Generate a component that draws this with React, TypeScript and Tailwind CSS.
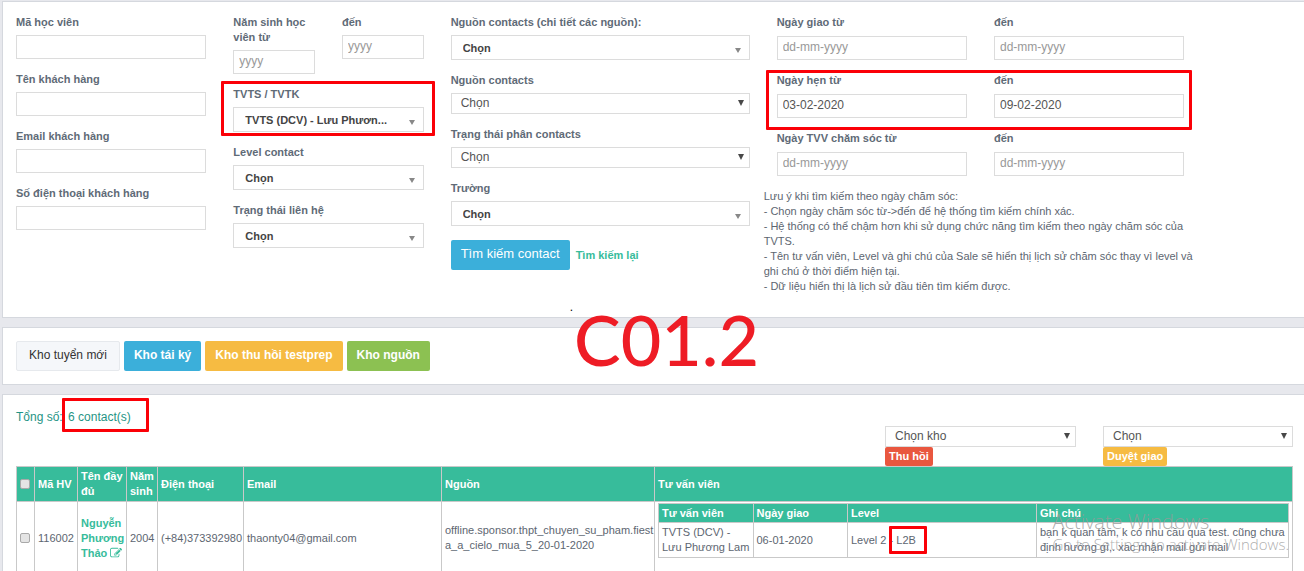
import React, { useId } from "react";

const labelClass = "block text-[11px] leading-[15px] font-bold text-[#5f6b77]";
const inputClass =
  "block h-6 w-full rounded-none border border-[#dcdcdc] bg-white px-[5px] pb-[2px] text-[12px] leading-[15px] text-[#555555] outline-none placeholder:text-[#999999]";

function TextField({
  label,
  placeholder,
  value,
  inputGap = "mt-[5px]",
}: {
  label: string;
  placeholder?: string;
  value?: string;
  inputGap?: string;
}) {
  const id = useId();
  return (
    <div className="mb-[13px]">
      <label htmlFor={id} className={labelClass}>
        {label}
      </label>
      <div className={inputGap}>
        <input id={id} type="text" placeholder={placeholder} defaultValue={value} className={inputClass} />
      </div>
    </div>
  );
}

function PlainSelect({ id, label, option }: { id?: string; label?: string; option: string }) {
  return (
    <div className="relative">
      <select
        id={id}
        aria-label={label}
        className="block h-[21px] w-full appearance-none rounded-none border border-[#dcdcdc] bg-white pr-5 pl-[9px] text-[12px] leading-[15px] text-[#555555] outline-none"
      >
        <option>{option}</option>
      </select>
      <svg viewBox="0 0 7 7" className="pointer-events-none absolute top-[7px] right-[6px] size-[6px] fill-[#484848]">
        <path d="M0 0h7L3.5 7z" />
      </svg>
    </div>
  );
}

function PlainSelectField({ label }: { label: string }) {
  const id = useId();
  return (
    <div className="mb-[13px]">
      <label htmlFor={id} className={labelClass}>
        {label}
      </label>
      <div className="mt-[5px]">
        <PlainSelect id={id} option="Chọn" />
      </div>
    </div>
  );
}

function ChosenField({ label, option = "Chọn", children }: { label: string; option?: string; children?: React.ReactNode }) {
  const id = useId();
  return (
    <div className="relative mb-[13px]">
      <label htmlFor={id} className={labelClass}>
        {label}
      </label>
      <div className="relative mt-[5px]">
        <select
          id={id}
          className="block h-[25px] w-full appearance-none rounded-none border border-[#dcdcdc] bg-white pt-[2px] pr-5 pl-[11px] text-[11px] leading-[15px] font-bold text-[#444444] outline-none"
        >
          <option>{option}</option>
        </select>
        <svg viewBox="0 0 6 5" className="pointer-events-none absolute top-[13px] right-[9px] h-[5px] w-[6px] fill-[#888888]">
          <path d="M0 0h6L3 5z" />
        </svg>
      </div>
      {children}
    </div>
  );
}

function Marker({ className }: { className: string }) {
  return <span aria-hidden="true" className={`pointer-events-none absolute rounded-[1px] border-[3px] border-[#fb0007] ${className}`} />;
}

function EditIcon() {
  return (
    <svg viewBox="0 0 1792 1792" className="inline-block size-[12px] fill-current align-[-2px]">
      <path d="M888 1184l116-116-152-152-116 116v56h96v96h56zm440-720q-16-16-33 1l-350 350q-17 17-1 33t33-1l350-350q17-17 1-33zm80 594v190q0 119-84.5 203.5t-203.5 84.5h-832q-119 0-203.5-84.5t-84.5-203.5v-832q0-119 84.5-203.5t203.5-84.5h832q63 0 117 25 15 7 18 23 3 17-9 29l-49 49q-14 14-32 8-23-6-45-6h-832q-66 0-113 47t-47 113v832q0 66 47 113t113 47h832q66 0 113-47t47-113v-126q0-13 9-22l64-64q15-15 35-7t20 29zm-96-738l288 288-672 672h-288v-288zm444 132l-92 92-288-288 92-92q28-28 68-28t68 28l152 152q28 28 28 68t-28 68z" />
    </svg>
  );
}

const panelClass = "border-y border-l border-[#d5d8de] bg-white";
const colClass = "pl-[13px] pr-[14px]";
const thClass = "border border-[#c9c9c9] bg-[#37bc9b] px-[3px] py-px text-left align-middle font-bold text-white";
const tdClass = "border border-[#c9c9c9] px-[3px] align-middle";
const checkClass = "block size-[10px] appearance-none rounded-[2px] border border-[#a9a9a9] bg-[#e4e4e4]";

const notes = [
  "Lưu ý khi tìm kiếm theo ngày chăm sóc:",
  "- Chọn ngày chăm sóc từ->đến để hệ thống tìm kiếm chính xác.",
  "- Hệ thống có thể chậm hơn khi sử dụng chức năng tìm kiếm theo ngày chăm sóc của TVTS.",
  "- Tên tư vấn viên, Level và ghi chú của Sale sẽ hiển thị lịch sử chăm sóc thay vì level và ghi chú ở thời điểm hiện tại.",
  "- Dữ liệu hiển thị là lịch sử đầu tiên tìm kiếm được.",
];

function SearchPanel() {
  return (
    <form className={`${panelClass} -mr-[3px] grid min-h-[317px] grid-cols-12 pt-[13px]`} onSubmit={(e) => e.preventDefault()}>
      <div className={`col-span-2 ${colClass}`}>
        <TextField label="Mã học viên" />
        <TextField label="Tên khách hàng" />
        <TextField label="Email khách hàng" />
        <TextField label="Số điện thoại khách hàng" />
      </div>

      <div className={`col-span-2 ${colClass}`}>
        <div className="grid grid-cols-2 gap-[27px]">
          <TextField label="Năm sinh học viên từ" placeholder="yyyy" />
          <TextField label="đến" placeholder="yyyy" />
        </div>
        <ChosenField label="TVTS / TVTK" option="TVTS (DCV) - Lưu Phươn...">
          <Marker className="-top-[6px] -right-[11px] -bottom-[4px] -left-[12px]" />
        </ChosenField>
        <ChosenField label="Level contact" />
        <ChosenField label="Trạng thái liên hệ" />
      </div>

      <div className={`col-span-3 ${colClass}`}>
        <ChosenField label="Nguồn contacts (chi tiết các nguồn):" />
        <PlainSelectField label="Nguồn contacts" />
        <PlainSelectField label="Trạng thái phân contacts" />
        <ChosenField label="Trường" />
        <div className="flex items-center gap-[6px] pt-px">
          <button type="submit" className="h-[30px] rounded-[2px] bg-[#3bafda] px-[10px] pb-[3px] text-[13px] text-white">
            Tìm kiếm contact
          </button>
          <a href="#reset" className="text-[11px] leading-[15px] font-bold text-[#37bc9b]">
            Tìm kiếm lại
          </a>
        </div>
        <p className="mt-[30px] ml-[119px] text-[12px] leading-[15px] text-black">.</p>
      </div>

      <div className="col-span-4">
        <div className={`grid grid-cols-2 gap-x-[27px] ${colClass}`}>
          <TextField label="Ngày giao từ" placeholder="dd-mm-yyyy" inputGap="mt-[6px]" />
          <TextField label="đến" placeholder="dd-mm-yyyy" inputGap="mt-[6px]" />
          <div className="relative col-span-2 grid grid-cols-2 gap-x-[27px]">
            <TextField label="Ngày hẹn từ" value="03-02-2020" inputGap="mt-[6px]" />
            <TextField label="đến" value="09-02-2020" inputGap="mt-[6px]" />
            <Marker className="-top-[3px] -right-[8px] bottom-[1px] -left-[11px]" />
          </div>
          <TextField label="Ngày TVV chăm sóc từ" placeholder="dd-mm-yyyy" inputGap="mt-[6px]" />
          <TextField label="đến" placeholder="dd-mm-yyyy" inputGap="mt-[6px]" />
        </div>
        <div className="text-[11px] leading-[15px]">
          {notes.map((line) => (
            <p key={line}>{line}</p>
          ))}
        </div>
      </div>
    </form>
  );
}

function WarehousePanel() {
  const base = "h-[30px] rounded-[2px] pb-[3px] text-[12px]";
  return (
    <section className={`${panelClass} relative mt-[9px] flex gap-1 p-[13px]`}>
      <button className={`${base} border border-[#e6e9ed] bg-[#f5f7fa] px-3 text-[#333333]`}>Kho tuyển mới</button>
      <button className={`${base} bg-[#3bafda] px-[10px] font-bold text-white`}>Kho tái ký</button>
      <button className={`${base} bg-[#f6bb42] px-[10px] font-bold text-white`}>Kho thu hồi testprep</button>
      <button className={`${base} bg-[#8cc152] px-[10px] font-bold text-white`}>Kho nguồn</button>
      <span className="pointer-events-none absolute -top-[31px] left-[571px] font-['Lato',sans-serif] text-[70px] leading-[84px] font-medium text-[#ee1c25]">
        C01.2
      </span>
    </section>
  );
}

function AdvisorTable() {
  return (
    <table className="w-full table-fixed border-collapse">
      <colgroup>
        <col className="w-[15%]" />
        <col className="w-[15%]" />
        <col className="w-[30%]" />
        <col className="w-[40%]" />
      </colgroup>
      <thead>
        <tr className="h-[19px]">
          <th className={thClass}>Tư vấn viên</th>
          <th className={thClass}>Ngày giao</th>
          <th className={thClass}>Level</th>
          <th className={thClass}>Ghi chú</th>
        </tr>
      </thead>
      <tbody>
        <tr className="h-[35px]">
          <td className={tdClass}>TVTS (DCV) - Lưu Phương Lam</td>
          <td className={tdClass}>06-01-2020</td>
          <td className={tdClass}>
            Level 2 -{" "}
            <span className="relative">
              L2B
              <Marker className="-top-[8px] -right-[11px] -bottom-[8px] -left-[7px]" />
            </span>
          </td>
          <td className={tdClass}>bạn k quan tâm, k có nhu cầu qua test. cũng chưa định hướng gì,. xac nhận mail gửi mail</td>
        </tr>
      </tbody>
    </table>
  );
}

function ContactsPanel() {
  return (
    <section className={`${panelClass} mt-[9px] grow pt-[13px] pr-[11px] pl-[13px]`}>
      <p className="text-[12px] leading-[18px] text-[#1f9485]">
        Tổng số:{" "}
        <span className="relative ml-[2px]">
          6 contact(s)
          <Marker className="-top-[12px] -right-[18px] -bottom-[8px] -left-[6px]" />
        </span>
      </p>
      <div className="flex justify-end gap-[27px]">
        <div className="w-[191px]">
          <PlainSelect label="Kho" option="Chọn kho" />
          <button className="block h-[19px] rounded-[2px] bg-[#e9573f] px-1 text-[11px] leading-[15px] font-bold text-white">Thu hồi</button>
        </div>
        <div className="w-[190px]">
          <PlainSelect label="Duyệt" option="Chọn" />
          <button className="block h-[19px] rounded-[2px] bg-[#f6bb42] px-1 text-[11px] leading-[15px] font-bold text-white">Duyệt giao</button>
        </div>
      </div>
      <table className="w-full table-fixed border-collapse text-[11px] leading-[15px]">
        <colgroup>
          <col className="w-[18px]" />
          <col className="w-[43px]" />
          <col className="w-[49px]" />
          <col className="w-[31px]" />
          <col className="w-[86px]" />
          <col className="w-[198px]" />
          <col className="w-[213px]" />
          <col />
        </colgroup>
        <thead>
          <tr className="h-[35px]">
            <th className={thClass}>
              <input type="checkbox" aria-label="Chọn tất cả" className={checkClass} />
            </th>
            <th className={thClass}>Mã HV</th>
            <th className={thClass}>Tên đầy đủ</th>
            <th className={thClass}>Năm sinh</th>
            <th className={thClass}>Điện thoại</th>
            <th className={thClass}>Email</th>
            <th className={thClass}>Nguồn</th>
            <th className={thClass}>Tư vấn viên</th>
          </tr>
        </thead>
        <tbody>
          <tr className="h-[73px]">
            <td className={tdClass}>
              <input type="checkbox" aria-label="Chọn 116002" className={checkClass} />
            </td>
            <td className={tdClass}>116002</td>
            <td className={tdClass}>
              <a href="#116002" className="font-bold text-[#37bc9b]">
                Nguyễn Phương Thảo <EditIcon />
              </a>
            </td>
            <td className={tdClass}>2004</td>
            <td className={tdClass}>(+84)373392980</td>
            <td className={tdClass}>thaonty04@gmail.com</td>
            <td className="border border-[#c9c9c9] pl-[3px] align-middle break-all">
              offline.sponsor.thpt_chuyen_su_pham.fiesta_a_cielo_mua_5_20-01-2020
            </td>
            <td className="border border-[#c9c9c9] px-[3px] pt-px align-top">
              <AdvisorTable />
            </td>
          </tr>
        </tbody>
      </table>
    </section>
  );
}

export default function App() {
  return (
    <main className="relative flex h-screen flex-col overflow-hidden bg-[#e7e8ed] pt-px pl-[2px] font-['Liberation_Sans',Arial,sans-serif] text-[#5d6671]">
      <SearchPanel />
      <WarehousePanel />
      <ContactsPanel />
      <div className="pointer-events-none absolute right-[15px] bottom-[17px] font-['Open_Sans',sans-serif] font-light text-[#999999]/80">
        <p className="text-[20px] leading-[24px]">Activate Windows</p>
        <p className="text-[15px] leading-[20px]">Go to Settings to activate Windows.</p>
      </div>
    </main>
  );
}
